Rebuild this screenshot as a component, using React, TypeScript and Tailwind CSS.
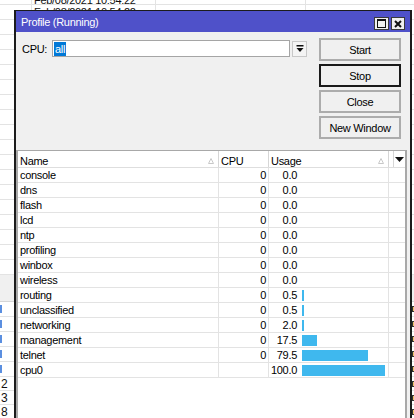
import React from "react";

type Proc = { name: string; cpu: string; usage: number };

const procs: Proc[] = [
  { name: "console", cpu: "0", usage: 0 },
  { name: "dns", cpu: "0", usage: 0 },
  { name: "flash", cpu: "0", usage: 0 },
  { name: "lcd", cpu: "0", usage: 0 },
  { name: "ntp", cpu: "0", usage: 0 },
  { name: "profiling", cpu: "0", usage: 0 },
  { name: "winbox", cpu: "0", usage: 0 },
  { name: "wireless", cpu: "0", usage: 0 },
  { name: "routing", cpu: "0", usage: 0.5 },
  { name: "unclassified", cpu: "0", usage: 0.5 },
  { name: "networking", cpu: "0", usage: 2.0 },
  { name: "management", cpu: "0", usage: 17.5 },
  { name: "telnet", cpu: "0", usage: 79.5 },
  { name: "cpu0", cpu: "", usage: 100.0 },
];

function SortMark() {
  return (
    <svg width="6" height="6" viewBox="0 0 6 6" className="shrink-0">
      <polygon points="3,0.5 5.5,5.5 0.5,5.5" fill="none" stroke="#c8c8c8" strokeWidth="1" />
    </svg>
  );
}

// spreadsheet window lying behind the profile window
function Backdrop() {
  return (
    <div className="-mt-[10px] flex flex-col">
      {Array.from({ length: 19 }).map((_, i) => (
        <div key={i} className="flex h-[15px] border-b border-[#e3e3e3]">
          <div className="w-[32px] border-r border-[#e3e3e3]" />
          <div className="w-[124px] border-r border-[#e3e3e3] pl-[2px] leading-[14px] text-[#111]">
            {i === 0 && <span className="inline-block translate-y-[3px]">Feb/08/2021 10:54:22</span>}
            {i === 1 && (
              <div className="h-[5px] overflow-hidden">
                <span>Feb/08/2021 10:54:22</span>
              </div>
            )}
          </div>
          <div className="w-[150px] border-r border-[#e3e3e3]" />
          <div className="flex-1" />
        </div>
      ))}
      <div className="h-[27px] border-b border-[#d6d6d6] bg-[#f0f0f0]" />
      {Array.from({ length: 5 }).map((_, i) => (
        <div key={i} className="flex h-[15px] items-center justify-between border-b border-[#e3e3e3]">
          <span className="h-[8px] w-[2px] bg-[#5b8fe0]" />
          <span className="h-[6px] w-[2px] border-y border-l border-[#333] bg-[#f3c16a]" />
        </div>
      ))}
      {["2", "3", "8"].map((d) => (
        <div key={d} className="flex h-[14px] items-center justify-between border-b border-[#e3e3e3] pl-[1px] text-[12px] leading-[14px] text-[#111]">
          <span>{d}</span>
          <span className="h-[6px] w-[2px] border-y border-l border-[#333] bg-[#f3c16a]" />
        </div>
      ))}
    </div>
  );
}

function WinButton({ label, focused }: { label: string; focused?: boolean }) {
  return (
    <button
      className={`flex h-[23px] w-[82px] items-center justify-center border-2 bg-[#f0f0f0] leading-[14px] text-black ${
        focused ? "border-[#1a1a1a]" : "border-[#acacac]"
      }`}
    >
      {label}
    </button>
  );
}

export default function App() {
  return (
    <div className="relative h-[418px] w-[414px] overflow-hidden bg-white font-['Liberation_Sans',Arial,sans-serif] text-[11px] tracking-[-0.3px]">
      <Backdrop />

      {/* Profile window */}
      <div className="absolute top-[10px] left-[14px] flex h-[430px] w-[398px] flex-col border-x-2 border-t border-[#1c1c1c] bg-[#f0f0f0]">
        {/* Title bar */}
        <div className="flex h-[21px] items-center bg-[#4f51c9] pr-[5px] pl-[5px] text-white">
          <span className="leading-[14px]">Profile (Running)</span>
          <div className="mt-auto mb-[2px] ml-auto flex gap-[2px]">
            <div className="flex h-[13px] w-[15px] items-center justify-center border border-[#3a3a3a] bg-[#f0f0f0]">
              <div className="h-[9px] w-[9px] border border-t-2 border-[#111]" />
            </div>
            <div className="flex h-[13px] w-[14px] items-center justify-center border border-[#3a3a3a] bg-[#f0f0f0]">
              <svg width="8" height="8" viewBox="0 0 8 8">
                <path d="M1 1 L7 7 M7 1 L1 7" stroke="#111" strokeWidth="2" />
              </svg>
            </div>
          </div>
        </div>

        {/* Controls */}
        <div className="flex h-[118px] gap-[12px] pt-[6px] pr-[9px] pl-[6px]">
          <div className="flex flex-1 items-center self-start pt-[2px]">
            <span className="w-[30px] leading-[14px] text-black">CPU:</span>
            <div className="flex h-[17px] flex-1 items-center border border-[#a5a5a5] bg-white pl-[1px]">
              <span className="bg-[#0078d7] px-[1px] leading-[14px] text-white">all</span>
            </div>
            <div className="ml-[2px] flex h-[16px] w-[15px] items-center justify-center border border-[#c8c8c8] bg-[#f4f4f4]">
              <svg width="8" height="7" viewBox="0 0 8 7">
                <rect x="0.5" y="0" width="7" height="1.5" fill="#111" />
                <polygon points="0.5,3 7.5,3 4,7" fill="#111" />
              </svg>
            </div>
          </div>
          <div className="flex flex-col gap-[3px]">
            <WinButton label="Start" />
            <WinButton label="Stop" focused />
            <WinButton label="Close" />
            <WinButton label="New Window" />
          </div>
        </div>

        {/* Table */}
        <div className="mr-[3px] flex flex-1 flex-col border-x-2 border-t border-[#a8a8a8] bg-white text-black">
          <div className="flex h-[17px] border-b border-[#dedede]">
            <div className="flex w-[201px] items-start justify-between border-r border-[#d6d6d6] pt-[3px] pr-[4px] pl-[2px] leading-[14px]">
              <span>Name</span>
              <span className="pt-[4px]">
                <SortMark />
              </span>
            </div>
            <div className="w-[50px] border-r border-[#d6d6d6] pt-[3px] pl-[2px] leading-[14px]">CPU</div>
            <div className="flex w-[120px] items-start justify-between border-r border-[#d6d6d6] pt-[3px] pr-[4px] pl-[2px] leading-[14px]">
              <span>Usage</span>
              <span className="pt-[4px]">
                <SortMark />
              </span>
            </div>
            <div className="w-[5px] border-r border-[#d6d6d6]" />
            <div className="flex flex-1 items-center justify-center pt-[1px]">
              <svg width="9" height="5" viewBox="0 0 9 5">
                <polygon points="0,0 9,0 4.5,5" fill="#111" />
              </svg>
            </div>
          </div>

          {procs.map((p) => (
            <div key={p.name} className="flex h-[15px] border-b border-[#e3e3e3] leading-[14px]">
              <div className="w-[201px] border-r border-[#e3e3e3] pl-[2px]">{p.name}</div>
              <div className="w-[50px] border-r border-[#e3e3e3] pr-[2px] text-right">{p.cpu}</div>
              <div className="flex w-[120px] items-center border-r border-[#e3e3e3]">
                <span className="w-[28px] shrink-0 text-right">{p.usage.toFixed(1)}</span>
                {p.usage > 0 && (
                  <span
                    className="ml-[5px] h-[11px] bg-[#3fb8ee]"
                    style={{ width: Math.max(2, Math.round(p.usage * 0.83)) }}
                  />
                )}
              </div>
              <div className="flex-1" />
            </div>
          ))}
        </div>
      </div>
    </div>
  );
}
